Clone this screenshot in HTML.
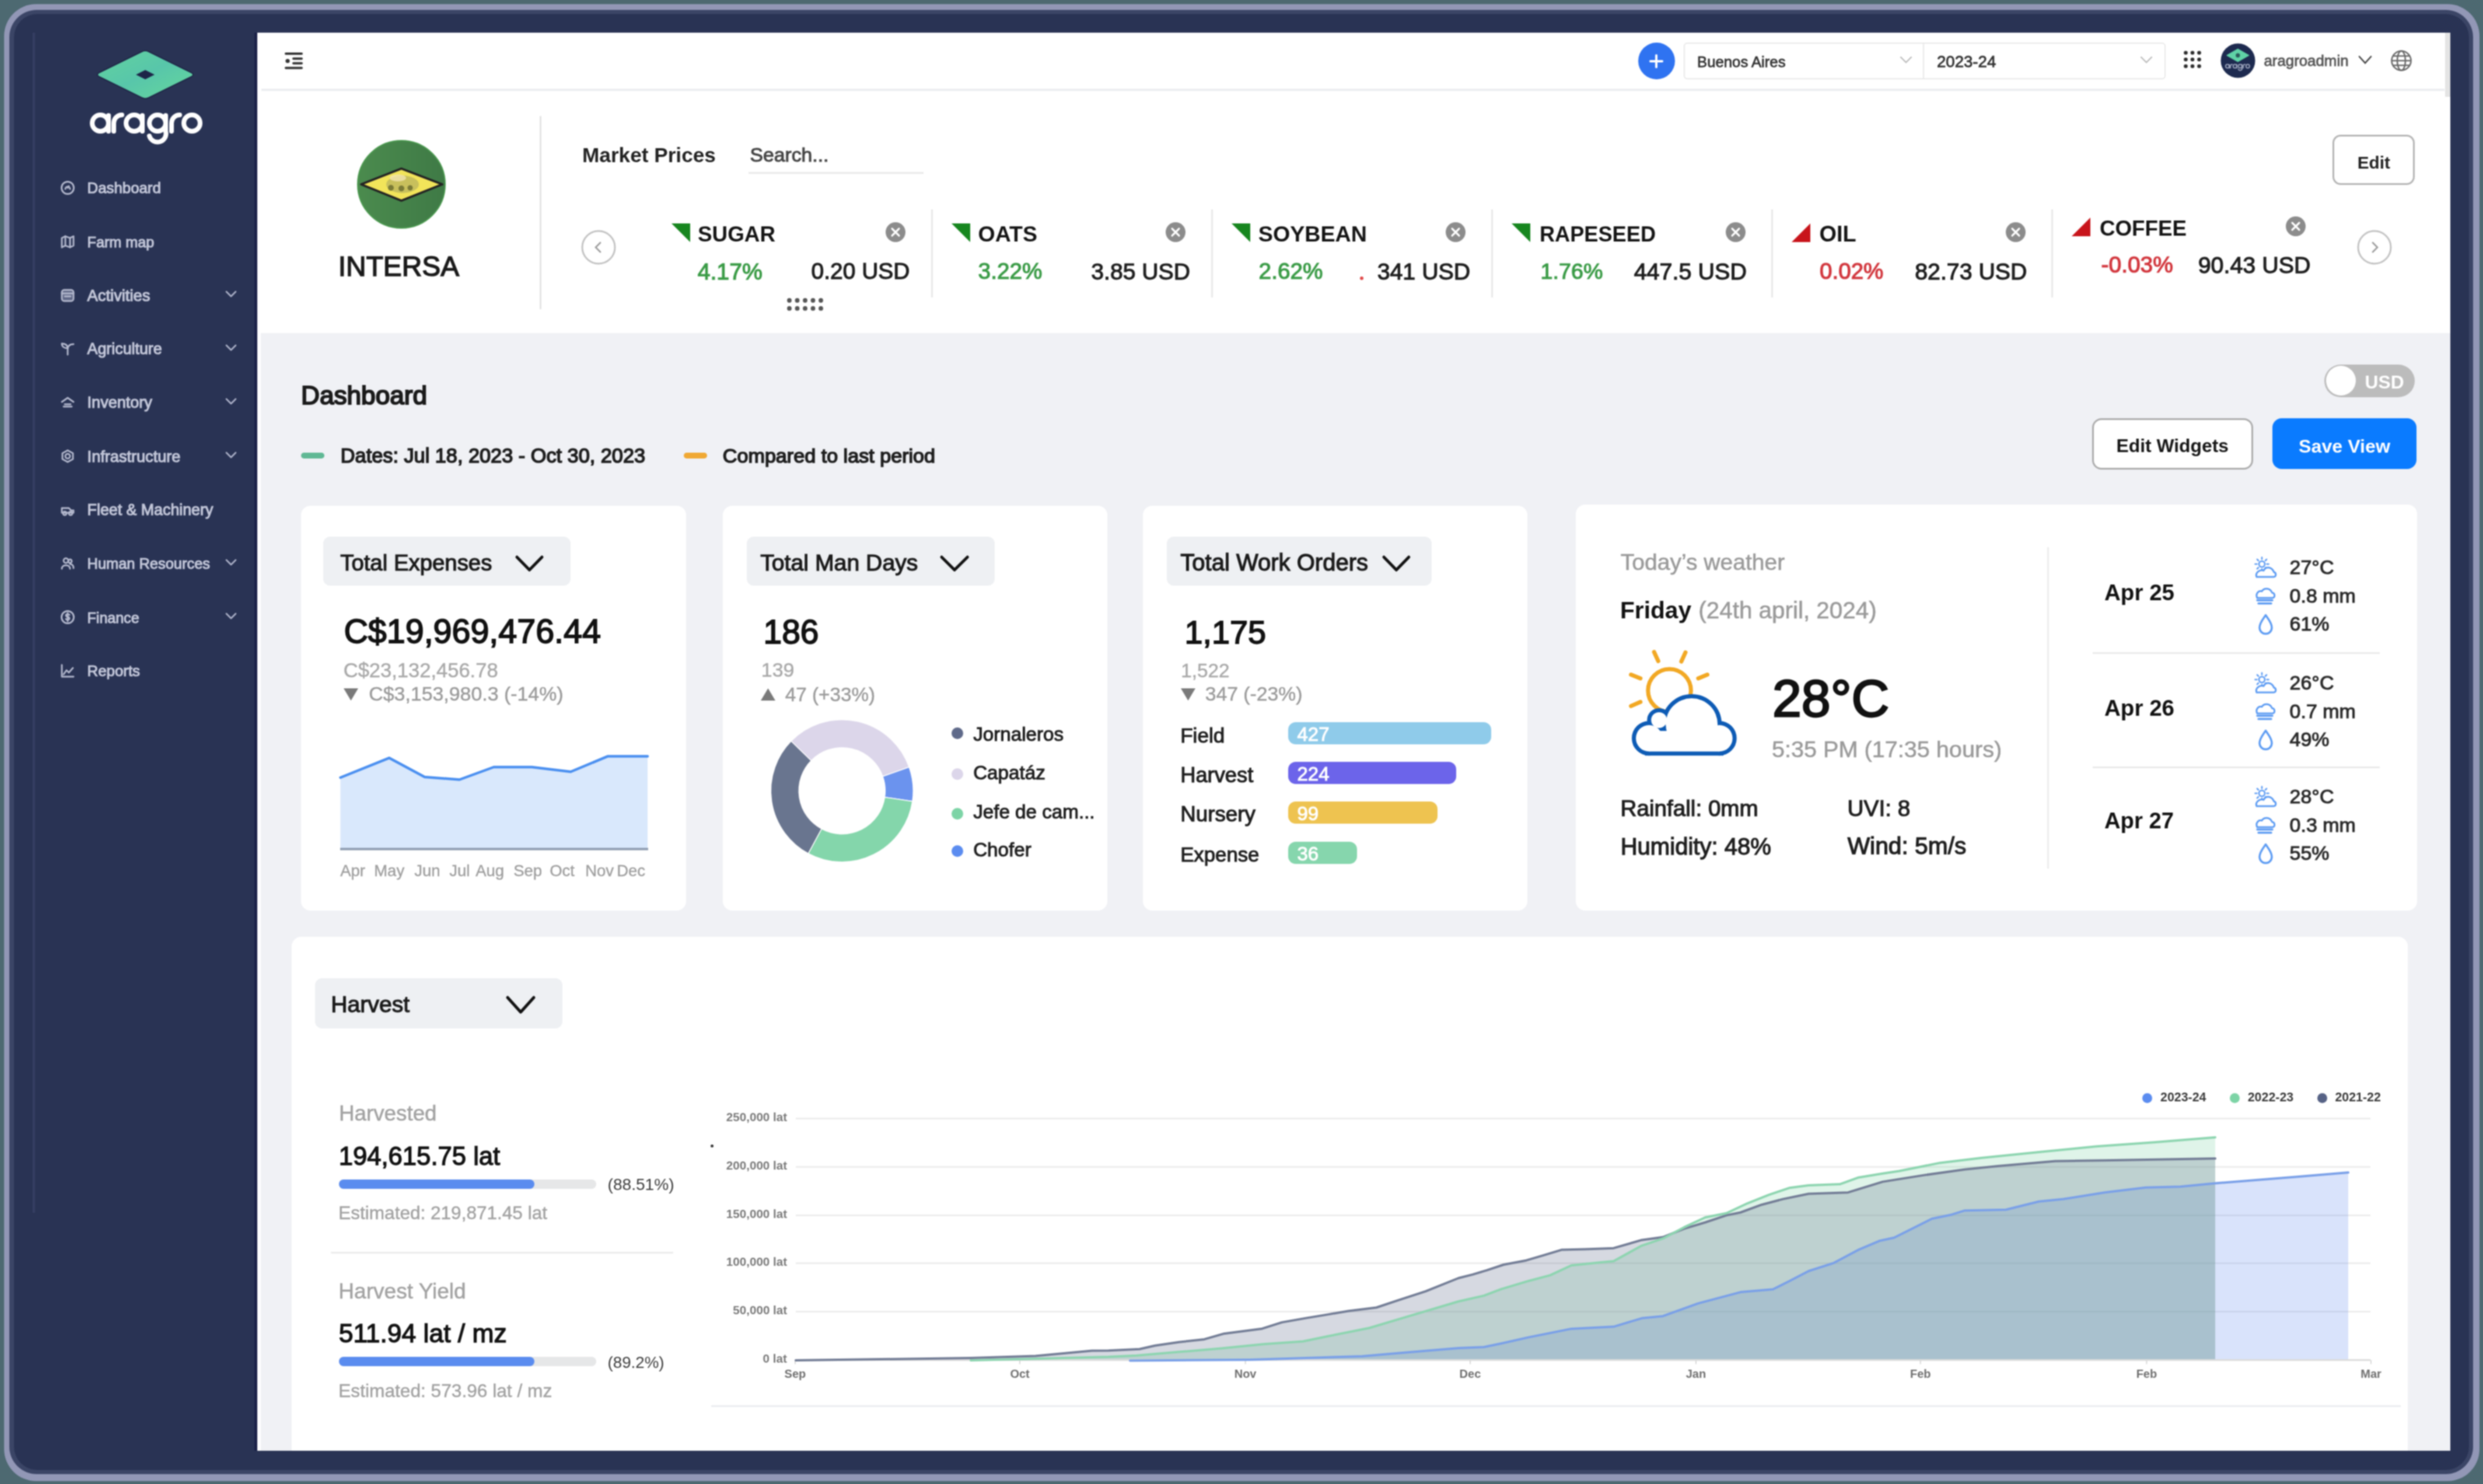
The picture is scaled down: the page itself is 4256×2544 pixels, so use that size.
<!DOCTYPE html>
<html><head><meta charset="utf-8"><title>aragro dashboard</title>
<style>
html,body{margin:0;padding:0}
body{width:4256px;height:2544px;position:relative;overflow:hidden;background:#4d6971;font-family:"Liberation Sans",sans-serif}
#wrap{position:absolute;left:0;top:0;width:4256px;height:2544px;filter:blur(0.8px)}
.t{position:absolute;line-height:1;white-space:nowrap;font-family:"Liberation Sans",sans-serif}
svg{overflow:visible}
</style></head><body>
<div id="wrap">
<div style="position:absolute;left:7.00px;top:7.00px;width:4242.60px;height:2531.60px;background:#9297b6;border-radius:55px"></div>
<div style="position:absolute;left:16.00px;top:17.00px;width:4223.00px;height:2510.00px;background:#3b4566;border-radius:47px"></div>
<div style="position:absolute;left:23.50px;top:24.00px;width:4208.50px;height:2496.00px;background:#293354;border-radius:40px"></div>
<div style="position:absolute;left:56.00px;top:56.00px;width:3.50px;height:2023.00px;background:#353e62"></div>
<div style="position:absolute;left:436.00px;top:56.00px;width:5.00px;height:2431.00px;background:#1b2248"></div>
<svg style="position:absolute;left:144px;top:80px;" width="200" height="96" viewBox="0 0 200 96">
<defs><linearGradient id="lg" x1="0" y1="0" x2="1" y2="1">
<stop offset="0" stop-color="#62d39f"/><stop offset="0.5" stop-color="#58c6aa"/><stop offset="1" stop-color="#66d89c"/></linearGradient></defs>
<path d="M 99 8.5 Q 105 5.5 111 8.5 L 184 44.5 Q 190 48 184 51.5 L 111 87.5 Q 105 90.5 99 87.5 L 26 51.5 Q 20 48 26 44.5 Z" fill="url(#lg)" stroke="#1f2747" stroke-width="2"/>
<path d="M 105 40 L 121 48 L 105 56 L 89 48 Z" fill="#1d2548"/>
</svg>
<svg style="position:absolute;left:152px;top:193px;" width="200" height="56" viewBox="0 0 200 56"><g fill="none" stroke="#ffffff" stroke-width="8" stroke-linecap="round">
<circle cx="20" cy="18" r="14"/><line x1="34" y1="5" x2="34" y2="32"/>
<path d="M 43 32 L 43 18 A 14 14 0 0 1 57 4"/>
<circle cx="78" cy="18" r="14"/><line x1="92" y1="5" x2="92" y2="32"/>
<circle cx="118" cy="18" r="14"/><path d="M 132 5 L 132 32 A 14 14 0 0 1 104 40"/>
<path d="M 142 32 L 142 18 A 14 14 0 0 1 156 4"/>
<circle cx="177" cy="18" r="14"/>
</g></svg>
<div class="t" style="left:149.58px;top:310.16px;font-size:25.80px;font-weight:400;color:#c3c7d9;-webkit-text-stroke:1.16px #c3c7d9;">Dashboard</div>
<svg style="position:absolute;left:103px;top:309px;" width="27" height="27" viewBox="0 0 27 27"><g fill="none" stroke="#b3b8cd" stroke-width="2.9" stroke-linecap="round" stroke-linejoin="round"><circle cx="13" cy="13" r="10.5"/><path d="M9 15 A4 4 0 0 1 17 15"/><line x1="13" y1="13" x2="15" y2="10"/></g></svg>
<div class="t" style="left:149.57px;top:402.69px;font-size:25.17px;font-weight:400;color:#c3c7d9;-webkit-text-stroke:1.13px #c3c7d9;">Farm map</div>
<svg style="position:absolute;left:103px;top:401px;" width="27" height="27" viewBox="0 0 27 27"><g fill="none" stroke="#b3b8cd" stroke-width="2.9" stroke-linecap="round" stroke-linejoin="round"><path d="M3 7 L9 4 L17 7 L23 4 L23 20 L17 23 L9 20 L3 23 Z"/><line x1="9" y1="4" x2="9" y2="20"/><line x1="17" y1="7" x2="17" y2="23"/></g></svg>
<div class="t" style="left:149.61px;top:492.88px;font-size:27.32px;font-weight:400;color:#c3c7d9;-webkit-text-stroke:1.23px #c3c7d9;">Activities</div>
<svg style="position:absolute;left:103px;top:493px;" width="27" height="27" viewBox="0 0 27 27"><g fill="none" stroke="#b3b8cd" stroke-width="2.9" stroke-linecap="round" stroke-linejoin="round"><rect x="3" y="4" width="20" height="19" rx="4" fill="#8e94b0" fill-opacity="0.55"/><line x1="3" y1="10" x2="23" y2="10"/><line x1="8" y1="15" x2="18" y2="15"/></g></svg>
<svg style="position:absolute;left:385px;top:497px;" width="22" height="14" viewBox="0 0 22 14"><path d="M3 3 L11 11 L19 3" fill="none" stroke="#aeb3ca" stroke-width="2.6" stroke-linecap="round" stroke-linejoin="round"/></svg>
<div class="t" style="left:149.60px;top:585.32px;font-size:26.80px;font-weight:400;color:#c3c7d9;-webkit-text-stroke:1.21px #c3c7d9;">Agriculture</div>
<svg style="position:absolute;left:103px;top:585px;" width="27" height="27" viewBox="0 0 27 27"><g fill="none" stroke="#b3b8cd" stroke-width="2.9" stroke-linecap="round" stroke-linejoin="round"><path d="M13 23 L13 12"/><path d="M13 12 C 13 6, 8 4, 3 4 C 3 9, 7 12, 13 12"/><path d="M13 12 C 14 7, 18 5, 23 5"/></g></svg>
<svg style="position:absolute;left:385px;top:589px;" width="22" height="14" viewBox="0 0 22 14"><path d="M3 3 L11 11 L19 3" fill="none" stroke="#aeb3ca" stroke-width="2.6" stroke-linecap="round" stroke-linejoin="round"/></svg>
<div class="t" style="left:149.61px;top:677.11px;font-size:27.04px;font-weight:400;color:#c3c7d9;-webkit-text-stroke:1.22px #c3c7d9;">Inventory</div>
<svg style="position:absolute;left:103px;top:677px;" width="27" height="27" viewBox="0 0 27 27"><g fill="none" stroke="#b3b8cd" stroke-width="2.9" stroke-linecap="round" stroke-linejoin="round"><path d="M3 12 L13 5 L23 12"/><path d="M6 20 L20 20 M8 16 L18 16"/></g></svg>
<svg style="position:absolute;left:385px;top:681px;" width="22" height="14" viewBox="0 0 22 14"><path d="M3 3 L11 11 L19 3" fill="none" stroke="#aeb3ca" stroke-width="2.6" stroke-linecap="round" stroke-linejoin="round"/></svg>
<div class="t" style="left:149.61px;top:769.04px;font-size:27.13px;font-weight:400;color:#c3c7d9;-webkit-text-stroke:1.22px #c3c7d9;">Infrastructure</div>
<svg style="position:absolute;left:103px;top:769px;" width="27" height="27" viewBox="0 0 27 27"><g fill="none" stroke="#b3b8cd" stroke-width="2.9" stroke-linecap="round" stroke-linejoin="round"><path d="M13 3 L22 8 L22 18 L13 23 L4 18 L4 8 Z"/><circle cx="13" cy="13" r="4"/></g></svg>
<svg style="position:absolute;left:385px;top:773px;" width="22" height="14" viewBox="0 0 22 14"><path d="M3 3 L11 11 L19 3" fill="none" stroke="#aeb3ca" stroke-width="2.6" stroke-linecap="round" stroke-linejoin="round"/></svg>
<div class="t" style="left:149.60px;top:861.34px;font-size:26.77px;font-weight:400;color:#c3c7d9;-webkit-text-stroke:1.20px #c3c7d9;">Fleet &amp; Machinery</div>
<svg style="position:absolute;left:103px;top:861px;" width="27" height="27" viewBox="0 0 27 27"><g fill="none" stroke="#b3b8cd" stroke-width="2.9" stroke-linecap="round" stroke-linejoin="round"><path d="M3 18 L3 10 L15 10 L19 14 L23 14 L23 18 Z"/><circle cx="8" cy="19" r="3"/><circle cx="18" cy="19" r="3"/></g></svg>
<div class="t" style="left:149.57px;top:954.49px;font-size:25.41px;font-weight:400;color:#c3c7d9;-webkit-text-stroke:1.14px #c3c7d9;">Human Resources</div>
<svg style="position:absolute;left:103px;top:953px;" width="27" height="27" viewBox="0 0 27 27"><g fill="none" stroke="#b3b8cd" stroke-width="2.9" stroke-linecap="round" stroke-linejoin="round"><circle cx="10" cy="8" r="4"/><path d="M3 22 C3 14, 17 14, 17 22"/><circle cx="17" cy="9" r="3"/><path d="M17 14 C21 14, 23 17, 23 21"/></g></svg>
<svg style="position:absolute;left:385px;top:957px;" width="22" height="14" viewBox="0 0 22 14"><path d="M3 3 L11 11 L19 3" fill="none" stroke="#aeb3ca" stroke-width="2.6" stroke-linecap="round" stroke-linejoin="round"/></svg>
<div class="t" style="left:149.56px;top:1046.82px;font-size:25.02px;font-weight:400;color:#c3c7d9;-webkit-text-stroke:1.13px #c3c7d9;">Finance</div>
<svg style="position:absolute;left:103px;top:1045px;" width="27" height="27" viewBox="0 0 27 27"><g fill="none" stroke="#b3b8cd" stroke-width="2.9" stroke-linecap="round" stroke-linejoin="round"><circle cx="13" cy="13" r="10.5"/><path d="M16 9 C 14 7, 10 8, 10 10 C 10 13, 16 12, 16 15 C 16 18, 11 18, 10 16"/><line x1="13" y1="6" x2="13" y2="20"/></g></svg>
<svg style="position:absolute;left:385px;top:1049px;" width="22" height="14" viewBox="0 0 22 14"><path d="M3 3 L11 11 L19 3" fill="none" stroke="#aeb3ca" stroke-width="2.6" stroke-linecap="round" stroke-linejoin="round"/></svg>
<div class="t" style="left:149.58px;top:1138.13px;font-size:25.84px;font-weight:400;color:#c3c7d9;-webkit-text-stroke:1.16px #c3c7d9;">Reports</div>
<svg style="position:absolute;left:103px;top:1137px;" width="27" height="27" viewBox="0 0 27 27"><g fill="none" stroke="#b3b8cd" stroke-width="2.9" stroke-linecap="round" stroke-linejoin="round"><path d="M3 3 L3 23 L23 23"/><path d="M6 19 L11 12 L15 16 L22 8"/></g></svg>
<div style="position:absolute;left:441.00px;top:56.00px;width:3759.00px;height:2431.00px;background:#ffffff"></div>
<div style="position:absolute;left:447.00px;top:571.00px;width:3753.00px;height:1916.00px;background:#f0f1f5"></div>
<div style="position:absolute;left:448.00px;top:152.00px;width:3742.00px;height:4.00px;background:#eceef1"></div>
<div style="position:absolute;left:4191.00px;top:56.00px;width:9.00px;height:110.00px;background:#e4e4e4"></div>
<svg style="position:absolute;left:486px;top:88px;" width="36" height="32" viewBox="0 0 36 32"><g fill="#333"><rect x="2" y="2" width="31" height="4" rx="2"/><rect x="15" y="10.5" width="18" height="4" rx="2"/><rect x="15" y="18.5" width="18" height="4" rx="2"/><rect x="2" y="26.5" width="31" height="4" rx="2"/><circle cx="7" cy="16.5" r="3.6"/></g></svg>
<div style="position:absolute;left:2807.50px;top:73.00px;width:63.00px;height:63.00px;background:#2f73f1;border-radius:50%"></div>
<div style="position:absolute;left:2827.00px;top:102.50px;width:24.00px;height:4.00px;background:#fff;border-radius:2px"></div>
<div style="position:absolute;left:2837.00px;top:92.50px;width:4.00px;height:24.00px;background:#fff;border-radius:2px"></div>
<div style="position:absolute;left:2885.50px;top:73.00px;width:826.00px;height:63.00px;border:2px solid #e8e8e8;border-radius:6px;box-sizing:border-box;background:#fff"></div>
<div style="position:absolute;left:3296.00px;top:74.00px;width:2.00px;height:61.00px;background:#e8e8e8"></div>
<div class="t" style="left:2909.11px;top:93.65px;font-size:25.70px;font-weight:400;color:#333;-webkit-text-stroke:0.82px #333;">Buenos Aires</div>
<div class="t" style="left:3319.94px;top:92.03px;font-size:27.61px;font-weight:400;color:#333;-webkit-text-stroke:0.88px #333;">2023-24</div>
<svg style="position:absolute;left:3256px;top:95px;" width="22" height="16" viewBox="0 0 22 16"><path d="M2 3 L11 12 L20 3" fill="none" stroke="#b8b8b8" stroke-width="2.2" stroke-linecap="round"/></svg>
<svg style="position:absolute;left:3668px;top:95px;" width="22" height="16" viewBox="0 0 22 16"><path d="M2 3 L11 12 L20 3" fill="none" stroke="#b8b8b8" stroke-width="2.2" stroke-linecap="round"/></svg>
<svg style="position:absolute;left:3743px;top:87px;" width="32" height="32" viewBox="0 0 32 32"><g fill="#2b2b2b"><circle cx="3.5" cy="3.5" r="3.3"/><circle cx="15.0" cy="3.5" r="3.3"/><circle cx="26.5" cy="3.5" r="3.3"/><circle cx="3.5" cy="15.0" r="3.3"/><circle cx="15.0" cy="15.0" r="3.3"/><circle cx="26.5" cy="15.0" r="3.3"/><circle cx="3.5" cy="26.5" r="3.3"/><circle cx="15.0" cy="26.5" r="3.3"/><circle cx="26.5" cy="26.5" r="3.3"/></g></svg>
<svg style="position:absolute;left:3806px;top:74px;" width="60" height="60" viewBox="0 0 60 60"><circle cx="30" cy="30" r="29.5" fill="#1d2a4f"/>
<path d="M29.8 10.1 L48.5 20.9 L29.8 31.7 L11.1 20.9 Z" fill="#5fd2a6" stroke="#5fd2a6" stroke-width="1.5" stroke-linejoin="round"/><circle cx="29.8" cy="20.9" r="3.6" fill="#2a5a5a"/>
<g transform="translate(7.5,35.5) scale(0.222)"><g fill="none" stroke="#a3abc2" stroke-width="8" stroke-linecap="round">
<circle cx="20" cy="18" r="14"/><line x1="34" y1="5" x2="34" y2="32"/>
<path d="M 43 32 L 43 18 A 14 14 0 0 1 57 4"/>
<circle cx="78" cy="18" r="14"/><line x1="92" y1="5" x2="92" y2="32"/>
<circle cx="118" cy="18" r="14"/><path d="M 132 5 L 132 32 A 14 14 0 0 1 104 40"/>
<path d="M 142 32 L 142 18 A 14 14 0 0 1 156 4"/>
<circle cx="177" cy="18" r="14"/>
</g></g></svg>
<div class="t" style="left:3880.41px;top:92.11px;font-size:25.85px;font-weight:400;color:#555;-webkit-text-stroke:0.83px #555;">aragroadmin</div>
<svg style="position:absolute;left:4042px;top:94px;" width="24" height="18" viewBox="0 0 24 18"><path d="M2 3 L12 14 L22 3" fill="none" stroke="#444" stroke-width="2.6" stroke-linecap="round"/></svg>
<svg style="position:absolute;left:4097px;top:85px;" width="38" height="38" viewBox="0 0 38 38"><g fill="none" stroke="#6a6a6a" stroke-width="2.6"><circle cx="19" cy="19" r="16.5"/><ellipse cx="19" cy="19" rx="7" ry="16.5"/><line x1="2.5" y1="19" x2="35.5" y2="19"/><path d="M5 11 L33 11 M5 27 L33 27"/></g></svg>
<svg style="position:absolute;left:610px;top:238px;" width="156" height="156" viewBox="0 0 156 156"><defs><linearGradient id="gl" x1="0" y1="0" x2="1" y2="0"><stop offset="0" stop-color="#4b8b4e"/><stop offset="1" stop-color="#3f7a46"/></linearGradient></defs>
<circle cx="78" cy="78" r="75" fill="url(#gl)" stroke="#4a9a4e" stroke-width="2"/>
<path d="M9 51 L78 24 L148 51 L78 79 Z" transform="translate(0,27)" fill="#f2e45a" stroke="#232323" stroke-width="4" stroke-linejoin="round"/>
<ellipse cx="80" cy="78" rx="28" ry="15" fill="#b9b45e" opacity="0.75"/><ellipse cx="72" cy="67" rx="14" ry="6" fill="#f2e4b0" opacity="0.8"/>
<g fill="#7a7a36"><circle cx="60" cy="84" r="5"/><circle cx="78" cy="85" r="5"/><circle cx="93" cy="84" r="4.5"/></g></svg>
<div class="t" style="left:579.77px;top:433.49px;font-size:47.86px;font-weight:400;color:#1a1a1a;-webkit-text-stroke:1.53px #1a1a1a;">INTERSA</div>
<div style="position:absolute;left:925.00px;top:199.00px;width:3.00px;height:331.00px;background:#e3e3e3"></div>
<div class="t" style="left:998.00px;top:247.60px;font-size:35.20px;font-weight:700;color:#222;">Market Prices</div>
<div class="t" style="left:1285.54px;top:248.85px;font-size:33.73px;font-weight:400;color:#444;-webkit-text-stroke:1.08px #444;">Search...</div>
<div style="position:absolute;left:1283.00px;top:295.00px;width:300.00px;height:3.00px;background:#e8e8e8"></div>
<svg style="position:absolute;left:996px;top:394px;" width="60" height="60" viewBox="0 0 60 60"><circle cx="30" cy="30" r="28" fill="none" stroke="#c2c2c2" stroke-width="3"/><path d="M33 22 L25 30 L33 38" fill="none" stroke="#9a9a9a" stroke-width="2.6" stroke-linecap="round"/></svg>
<svg style="position:absolute;left:4040px;top:394px;" width="60" height="60" viewBox="0 0 60 60"><circle cx="30" cy="30" r="28" fill="none" stroke="#c2c2c2" stroke-width="3"/><path d="M27 22 L35 30 L27 38" fill="none" stroke="#9a9a9a" stroke-width="2.6" stroke-linecap="round"/></svg>
<svg style="position:absolute;left:1150.5px;top:383px;" width="32" height="32" viewBox="0 0 32 32"><path d="M0 0 L32 0 L32 32 Z" fill="#17861f"/></svg>
<div class="t" style="left:1196.00px;top:383.51px;font-size:36.84px;font-weight:700;color:#141414;">SUGAR</div>
<svg style="position:absolute;left:1517px;top:380px;" width="36" height="36" viewBox="0 0 36 36"><circle cx="18" cy="18" r="17" fill="#8c8c8c"/><path d="M12 12 L24 24 M24 12 L12 24" stroke="#fff" stroke-width="3.2" stroke-linecap="round"/></svg>
<div class="t" style="left:1195.63px;top:445.78px;font-size:39.24px;font-weight:400;color:#3a9b46;-webkit-text-stroke:1.26px #3a9b46;">4.17%</div>
<div class="t" style="left:1390.62px;top:446.05px;font-size:38.93px;font-weight:400;color:#1e1e1e;-webkit-text-stroke:1.25px #1e1e1e;">0.20 USD</div>
<div style="position:absolute;left:1596.00px;top:359.00px;width:3.00px;height:151.00px;background:#e8e8e8"></div>
<svg style="position:absolute;left:1630.5px;top:383px;" width="32" height="32" viewBox="0 0 32 32"><path d="M0 0 L32 0 L32 32 Z" fill="#17861f"/></svg>
<div class="t" style="left:1676.60px;top:382.97px;font-size:37.49px;font-weight:700;color:#141414;">OATS</div>
<svg style="position:absolute;left:1997px;top:380px;" width="36" height="36" viewBox="0 0 36 36"><circle cx="18" cy="18" r="17" fill="#8c8c8c"/><path d="M12 12 L24 24 M24 12 L12 24" stroke="#fff" stroke-width="3.2" stroke-linecap="round"/></svg>
<div class="t" style="left:1676.62px;top:446.23px;font-size:38.72px;font-weight:400;color:#3a9b46;-webkit-text-stroke:1.24px #3a9b46;">3.22%</div>
<div class="t" style="left:1870.33px;top:445.87px;font-size:39.13px;font-weight:400;color:#1e1e1e;-webkit-text-stroke:1.25px #1e1e1e;">3.85 USD</div>
<div style="position:absolute;left:2076.00px;top:359.00px;width:3.00px;height:151.00px;background:#e8e8e8"></div>
<svg style="position:absolute;left:2110.5px;top:383px;" width="32" height="32" viewBox="0 0 32 32"><path d="M0 0 L32 0 L32 32 Z" fill="#17861f"/></svg>
<div class="t" style="left:2156.80px;top:382.83px;font-size:37.65px;font-weight:700;color:#141414;">SOYBEAN</div>
<svg style="position:absolute;left:2477px;top:380px;" width="36" height="36" viewBox="0 0 36 36"><circle cx="18" cy="18" r="17" fill="#8c8c8c"/><path d="M12 12 L24 24 M24 12 L12 24" stroke="#fff" stroke-width="3.2" stroke-linecap="round"/></svg>
<div class="t" style="left:2157.62px;top:446.23px;font-size:38.72px;font-weight:400;color:#3a9b46;-webkit-text-stroke:1.24px #3a9b46;">2.62%</div>
<div class="t" style="left:2360.63px;top:445.69px;font-size:39.35px;font-weight:400;color:#1e1e1e;-webkit-text-stroke:1.26px #1e1e1e;">341 USD</div>
<div style="position:absolute;left:2556.00px;top:359.00px;width:3.00px;height:151.00px;background:#e8e8e8"></div>
<svg style="position:absolute;left:2590.5px;top:383px;" width="32" height="32" viewBox="0 0 32 32"><path d="M0 0 L32 0 L32 32 Z" fill="#17861f"/></svg>
<div class="t" style="left:2639.00px;top:384.07px;font-size:36.18px;font-weight:700;color:#141414;">RAPESEED</div>
<svg style="position:absolute;left:2957px;top:380px;" width="36" height="36" viewBox="0 0 36 36"><circle cx="18" cy="18" r="17" fill="#8c8c8c"/><path d="M12 12 L24 24 M24 12 L12 24" stroke="#fff" stroke-width="3.2" stroke-linecap="round"/></svg>
<div class="t" style="left:2640.60px;top:447.11px;font-size:37.67px;font-weight:400;color:#3a9b46;-webkit-text-stroke:1.21px #3a9b46;">1.76%</div>
<div class="t" style="left:2800.63px;top:445.55px;font-size:39.52px;font-weight:400;color:#1e1e1e;-webkit-text-stroke:1.26px #1e1e1e;">447.5 USD</div>
<div style="position:absolute;left:3036.00px;top:359.00px;width:3.00px;height:151.00px;background:#e8e8e8"></div>
<svg style="position:absolute;left:3070.5px;top:383px;" width="32" height="32" viewBox="0 0 32 32"><path d="M0 32 L32 32 L32 0 Z" fill="#c8141b"/></svg>
<div class="t" style="left:3118.50px;top:382.62px;font-size:37.90px;font-weight:700;color:#141414;">OIL</div>
<svg style="position:absolute;left:3437px;top:380px;" width="36" height="36" viewBox="0 0 36 36"><circle cx="18" cy="18" r="17" fill="#8c8c8c"/><path d="M12 12 L24 24 M24 12 L12 24" stroke="#fff" stroke-width="3.2" stroke-linecap="round"/></svg>
<div class="t" style="left:3119.12px;top:446.37px;font-size:38.54px;font-weight:400;color:#d2363d;-webkit-text-stroke:1.23px #d2363d;">0.02%</div>
<div class="t" style="left:3282.23px;top:445.74px;font-size:39.29px;font-weight:400;color:#1e1e1e;-webkit-text-stroke:1.26px #1e1e1e;">82.73 USD</div>
<div style="position:absolute;left:3516.00px;top:359.00px;width:3.00px;height:151.00px;background:#e8e8e8"></div>
<svg style="position:absolute;left:3550.5px;top:373px;" width="32" height="32" viewBox="0 0 32 32"><path d="M0 32 L32 32 L32 0 Z" fill="#c8141b"/></svg>
<div class="t" style="left:3599.00px;top:373.60px;font-size:36.74px;font-weight:700;color:#141414;">COFFEE</div>
<svg style="position:absolute;left:3917px;top:370px;" width="36" height="36" viewBox="0 0 36 36"><circle cx="18" cy="18" r="17" fill="#8c8c8c"/><path d="M12 12 L24 24 M24 12 L12 24" stroke="#fff" stroke-width="3.2" stroke-linecap="round"/></svg>
<div class="t" style="left:3601.62px;top:435.09px;font-size:38.88px;font-weight:400;color:#d2363d;-webkit-text-stroke:1.24px #d2363d;">-0.03%</div>
<div class="t" style="left:3767.63px;top:434.64px;font-size:39.41px;font-weight:400;color:#1e1e1e;-webkit-text-stroke:1.26px #1e1e1e;">90.43 USD</div>
<div style="position:absolute;left:2331.00px;top:474.00px;width:6.00px;height:6.00px;background:#e04848;border-radius:50%"></div>
<svg style="position:absolute;left:1348.6px;top:511.4px;" width="64" height="22" viewBox="0 0 64 22"><g fill="#555"><circle cx="4.0" cy="4.0" r="3.9"/><circle cx="17.5" cy="4.0" r="3.9"/><circle cx="31.0" cy="4.0" r="3.9"/><circle cx="44.5" cy="4.0" r="3.9"/><circle cx="58.0" cy="4.0" r="3.9"/><circle cx="4.0" cy="17.7" r="3.9"/><circle cx="17.5" cy="17.7" r="3.9"/><circle cx="31.0" cy="17.7" r="3.9"/><circle cx="44.5" cy="17.7" r="3.9"/><circle cx="58.0" cy="17.7" r="3.9"/></g></svg>
<div style="position:absolute;left:3997.60px;top:231.30px;width:141.00px;height:86.00px;border:3px solid #b4b4b4;border-radius:14px;box-sizing:border-box;background:#fff"></div>
<div class="t" style="left:4040.70px;top:263.78px;font-size:29.79px;font-weight:700;color:#222;">Edit</div>
<div class="t" style="left:516.10px;top:655.64px;font-size:44.13px;font-weight:400;color:#1a1a1a;-webkit-text-stroke:2.21px #1a1a1a;">Dashboard</div>
<div style="position:absolute;left:516.00px;top:776.00px;width:40.00px;height:10.00px;background:#5fb894;border-radius:5px"></div>
<div class="t" style="left:583.86px;top:763.97px;font-size:34.29px;font-weight:400;color:#1e1e1e;-webkit-text-stroke:1.71px #1e1e1e;">Dates: Jul 18, 2023 - Oct 30, 2023</div>
<div style="position:absolute;left:1172.00px;top:776.00px;width:40.00px;height:10.00px;background:#f0a833;border-radius:5px"></div>
<div class="t" style="left:1238.85px;top:764.11px;font-size:34.13px;font-weight:400;color:#1e1e1e;-webkit-text-stroke:1.71px #1e1e1e;">Compared to last period</div>
<div style="position:absolute;left:3984.00px;top:624.50px;width:155.00px;height:56.50px;background:#bcbcbc;border-radius:29px"></div>
<div style="position:absolute;left:3986.60px;top:627.00px;width:51.00px;height:51.00px;background:#fff;border-radius:50%"></div>
<div class="t" style="left:4053.60px;top:640.12px;font-size:31.75px;font-weight:700;color:#ffffff;">USD</div>
<div style="position:absolute;left:3586.00px;top:716.50px;width:276.00px;height:88.50px;border:3px solid #ababab;border-radius:16px;box-sizing:border-box;background:#fff"></div>
<div class="t" style="left:3627.50px;top:749.04px;font-size:31.84px;font-weight:700;color:#151515;">Edit Widgets</div>
<div style="position:absolute;left:3894.50px;top:717.00px;width:247.50px;height:87.00px;background:#0a7bff;border-radius:16px"></div>
<div class="t" style="left:3940.00px;top:748.74px;font-size:32.21px;font-weight:700;color:#ffffff;">Save View</div>
<div style="position:absolute;left:516.00px;top:867.00px;width:660.00px;height:694.00px;background:#fff;border-radius:16px"></div>
<div style="position:absolute;left:1239.00px;top:867.00px;width:659.00px;height:694.00px;background:#fff;border-radius:16px"></div>
<div style="position:absolute;left:1959.00px;top:867.00px;width:659.00px;height:694.00px;background:#fff;border-radius:16px"></div>
<div style="position:absolute;left:2701.00px;top:865.00px;width:1442.00px;height:696.00px;background:#fff;border-radius:16px"></div>
<div style="position:absolute;left:554.00px;top:920.00px;width:424.00px;height:83.50px;background:#eef0f3;border-radius:12px"></div>
<div class="t" style="left:583.21px;top:945.52px;font-size:38.37px;font-weight:400;color:#1a1a1a;-webkit-text-stroke:1.23px #1a1a1a;">Total Expenses</div>
<svg style="position:absolute;left:882px;top:951px;" width="51" height="30" viewBox="0 0 51 30"><path d="M4 4 L25.5 26.0 L47.0 4" fill="none" stroke="#111" stroke-width="5" stroke-linecap="round" stroke-linejoin="round"/></svg>
<div style="position:absolute;left:1280.00px;top:920.00px;width:424.50px;height:83.50px;background:#eef0f3;border-radius:12px"></div>
<div class="t" style="left:1303.23px;top:944.81px;font-size:39.21px;font-weight:400;color:#1a1a1a;-webkit-text-stroke:1.25px #1a1a1a;">Total Man Days</div>
<svg style="position:absolute;left:1609.5px;top:951px;" width="52" height="30" viewBox="0 0 52 30"><path d="M4 4 L26.1 26.0 L48.3 4" fill="none" stroke="#111" stroke-width="5" stroke-linecap="round" stroke-linejoin="round"/></svg>
<div style="position:absolute;left:2000.00px;top:920.00px;width:454.00px;height:83.50px;background:#eef0f3;border-radius:12px"></div>
<div class="t" style="left:2023.24px;top:944.11px;font-size:40.04px;font-weight:400;color:#1a1a1a;-webkit-text-stroke:1.28px #1a1a1a;">Total Work Orders</div>
<svg style="position:absolute;left:2367.9px;top:951px;" width="50" height="30" viewBox="0 0 50 30"><path d="M4 4 L25.4 26.0 L46.8 4" fill="none" stroke="#111" stroke-width="5" stroke-linecap="round" stroke-linejoin="round"/></svg>
<div class="t" style="left:589.42px;top:1054.40px;font-size:57.42px;font-weight:400;color:#111;-webkit-text-stroke:1.84px #111;">C$19,969,476.44</div>
<div class="t" style="left:588.76px;top:1131.77px;font-size:34.53px;font-weight:400;color:#a9a9a9;-webkit-text-stroke:0.52px #a9a9a9;">C$23,132,456.78</div>
<svg style="position:absolute;left:589px;top:1180px;" width="26" height="22" viewBox="0 0 26 22"><path d="M0 0 L25 0 L12.5 21 Z" fill="#7a7a7a"/></svg>
<div class="t" style="left:632.25px;top:1173.01px;font-size:33.89px;font-weight:400;color:#9b9b9b;-webkit-text-stroke:0.51px #9b9b9b;">C$3,153,980.3 (-14%)</div>
<div class="t" style="left:1308.51px;top:1054.81px;font-size:56.93px;font-weight:400;color:#111;-webkit-text-stroke:1.82px #111;">186</div>
<div class="t" style="left:1304.85px;top:1132.31px;font-size:33.89px;font-weight:400;color:#a9a9a9;-webkit-text-stroke:0.51px #a9a9a9;">139</div>
<svg style="position:absolute;left:1304px;top:1180px;" width="26" height="22" viewBox="0 0 26 22"><path d="M0 21 L25 21 L12.5 0 Z" fill="#7a7a7a"/></svg>
<div class="t" style="left:1345.65px;top:1173.51px;font-size:33.30px;font-weight:400;color:#9b9b9b;-webkit-text-stroke:0.50px #9b9b9b;">47 (+33%)</div>
<div class="t" style="left:2030.39px;top:1055.72px;font-size:55.85px;font-weight:400;color:#111;-webkit-text-stroke:1.79px #111;">1,175</div>
<div class="t" style="left:2024.25px;top:1132.78px;font-size:33.33px;font-weight:400;color:#a9a9a9;-webkit-text-stroke:0.50px #a9a9a9;">1,522</div>
<svg style="position:absolute;left:2024px;top:1180px;" width="26" height="22" viewBox="0 0 26 22"><path d="M0 0 L25 0 L12.5 21 Z" fill="#7a7a7a"/></svg>
<div class="t" style="left:2065.65px;top:1173.15px;font-size:33.73px;font-weight:400;color:#9b9b9b;-webkit-text-stroke:0.51px #9b9b9b;">347 (-23%)</div>
<svg style="position:absolute;left:570px;top:1280px;" width="560" height="190" viewBox="0 0 560 190"><polygon points="13.5,175 13.5,53.0 97.0,19.3 157.9,52.0 217.6,56.5 276.3,35.0 341.7,35.0 408.2,43.0 471.4,16.6 540.0,16.6 540.0,175" fill="#d9e8fc"/><polyline points="13.5,53.0 97.0,19.3 157.9,52.0 217.6,56.5 276.3,35.0 341.7,35.0 408.2,43.0 471.4,16.6 540.0,16.6" fill="none" stroke="#4a8ff0" stroke-width="4.5" stroke-linejoin="round" stroke-linecap="round"/><line x1="13" y1="175.5" x2="541" y2="175.5" stroke="#8d9bb0" stroke-width="4"/></svg>
<div class="t" style="left:583.21px;top:1478.72px;font-size:27.50px;font-weight:400;color:#9e9e9e;-webkit-text-stroke:0.41px #9e9e9e;">Apr</div>
<div class="t" style="left:641.21px;top:1478.72px;font-size:27.50px;font-weight:400;color:#9e9e9e;-webkit-text-stroke:0.41px #9e9e9e;">May</div>
<div class="t" style="left:710.21px;top:1478.72px;font-size:27.50px;font-weight:400;color:#9e9e9e;-webkit-text-stroke:0.41px #9e9e9e;">Jun</div>
<div class="t" style="left:770.21px;top:1478.72px;font-size:27.50px;font-weight:400;color:#9e9e9e;-webkit-text-stroke:0.41px #9e9e9e;">Jul</div>
<div class="t" style="left:815.21px;top:1478.72px;font-size:27.50px;font-weight:400;color:#9e9e9e;-webkit-text-stroke:0.41px #9e9e9e;">Aug</div>
<div class="t" style="left:880.21px;top:1478.72px;font-size:27.50px;font-weight:400;color:#9e9e9e;-webkit-text-stroke:0.41px #9e9e9e;">Sep</div>
<div class="t" style="left:942.21px;top:1478.72px;font-size:27.50px;font-weight:400;color:#9e9e9e;-webkit-text-stroke:0.41px #9e9e9e;">Oct</div>
<div class="t" style="left:1003.21px;top:1478.72px;font-size:27.50px;font-weight:400;color:#9e9e9e;-webkit-text-stroke:0.41px #9e9e9e;">Nov</div>
<div class="t" style="left:1057.21px;top:1478.72px;font-size:27.50px;font-weight:400;color:#9e9e9e;-webkit-text-stroke:0.41px #9e9e9e;">Dec</div>
<svg style="position:absolute;left:1300px;top:1220px;" width="290" height="280" viewBox="0 0 290 280"><path d="M55.99 50.49 A122 122 0 0 1 258.30 94.98 L213.06 111.00 A74 74 0 0 0 90.34 84.02 Z" fill="#dcd6ea" stroke="#fff" stroke-width="1.5"/><path d="M258.30 94.98 A122 122 0 0 1 263.96 153.73 L216.49 146.64 A74 74 0 0 0 213.06 111.00 Z" fill="#6b93ee" stroke="#fff" stroke-width="1.5"/><path d="M263.96 153.73 A122 122 0 0 1 85.46 243.12 L108.22 200.86 A74 74 0 0 0 216.49 146.64 Z" fill="#84d6ab" stroke="#fff" stroke-width="1.5"/><path d="M85.46 243.12 A122 122 0 0 1 55.99 50.49 L90.34 84.02 A74 74 0 0 0 108.22 200.86 Z" fill="#69758f" stroke="#fff" stroke-width="1.5"/></svg>
<div style="position:absolute;left:1630.60px;top:1247.00px;width:20.00px;height:20.00px;background:#5f6a8a;border-radius:50%"></div>
<div class="t" style="left:1668.13px;top:1242.40px;font-size:33.20px;font-weight:400;color:#1e1e1e;-webkit-text-stroke:1.06px #1e1e1e;">Jornaleros</div>
<div style="position:absolute;left:1630.60px;top:1317.00px;width:20.00px;height:20.00px;background:#dcd6ea;border-radius:50%"></div>
<div class="t" style="left:1668.13px;top:1307.90px;font-size:33.20px;font-weight:400;color:#1e1e1e;-webkit-text-stroke:1.06px #1e1e1e;">Capatáz</div>
<div style="position:absolute;left:1630.60px;top:1385.00px;width:20.00px;height:20.00px;background:#7dd4a6;border-radius:50%"></div>
<div class="t" style="left:1668.13px;top:1374.50px;font-size:33.20px;font-weight:400;color:#1e1e1e;-webkit-text-stroke:1.06px #1e1e1e;">Jefe de cam...</div>
<div style="position:absolute;left:1630.60px;top:1449.00px;width:20.00px;height:20.00px;background:#5b8cf0;border-radius:50%"></div>
<div class="t" style="left:1668.13px;top:1440.30px;font-size:33.20px;font-weight:400;color:#1e1e1e;-webkit-text-stroke:1.06px #1e1e1e;">Chofer</div>
<div style="position:absolute;left:2208.00px;top:1237.60px;width:348.00px;height:38.00px;background:#8fcbea;border-radius:13px"></div>
<div class="t" style="left:2223.53px;top:1241.67px;font-size:33.00px;font-weight:400;color:#ffffff;-webkit-text-stroke:1.06px #ffffff;">427</div>
<div class="t" style="left:2023.16px;top:1243.25px;font-size:35.15px;font-weight:400;color:#1e1e1e;-webkit-text-stroke:1.12px #1e1e1e;">Field</div>
<div style="position:absolute;left:2208.00px;top:1305.50px;width:288.00px;height:38.00px;background:#6c64ea;border-radius:13px"></div>
<div class="t" style="left:2223.53px;top:1309.57px;font-size:33.00px;font-weight:400;color:#ffffff;-webkit-text-stroke:1.06px #ffffff;">224</div>
<div class="t" style="left:2023.18px;top:1311.23px;font-size:36.35px;font-weight:400;color:#1e1e1e;-webkit-text-stroke:1.16px #1e1e1e;">Harvest</div>
<div style="position:absolute;left:2208.00px;top:1374.00px;width:256.00px;height:38.00px;background:#eec350;border-radius:13px"></div>
<div class="t" style="left:2223.53px;top:1378.07px;font-size:33.00px;font-weight:400;color:#ffffff;-webkit-text-stroke:1.06px #ffffff;">99</div>
<div class="t" style="left:2023.19px;top:1377.87px;font-size:36.78px;font-weight:400;color:#1e1e1e;-webkit-text-stroke:1.18px #1e1e1e;">Nursery</div>
<div style="position:absolute;left:2208.00px;top:1443.00px;width:118.00px;height:38.00px;background:#86d6ad;border-radius:13px"></div>
<div class="t" style="left:2223.53px;top:1447.07px;font-size:33.00px;font-weight:400;color:#ffffff;-webkit-text-stroke:1.06px #ffffff;">36</div>
<div class="t" style="left:2023.16px;top:1447.56px;font-size:34.78px;font-weight:400;color:#1e1e1e;-webkit-text-stroke:1.11px #1e1e1e;">Expense</div>
<div class="t" style="left:2777.69px;top:943.92px;font-size:39.07px;font-weight:400;color:#9a9a9a;-webkit-text-stroke:0.59px #9a9a9a;">Today’s weather</div>
<div class="t" style="left:2777.00px;top:1026.08px;font-size:40.67px;font-weight:700;color:#111;">Friday</div>
<div class="t" style="left:2911.30px;top:1026.30px;font-size:40.40px;font-weight:400;color:#9a9a9a;-webkit-text-stroke:0.61px #9a9a9a;">(24th april, 2024)</div>
<svg style="position:absolute;left:2790px;top:1113px;" width="190" height="188" viewBox="0 0 190 188"><g stroke="#f2a823" stroke-width="7" stroke-linecap="round" fill="none"><circle cx="71.6" cy="70.8" r="36.8"/><line x1="45.2" y1="4.7" x2="52.3" y2="20.3"/><line x1="99" y1="5.4" x2="91.9" y2="21"/><line x1="5.6" y1="43.6" x2="21.8" y2="50"/><line x1="136.5" y1="43.6" x2="120.9" y2="50"/><line x1="5.6" y1="97.4" x2="21.8" y2="90.3"/></g><circle cx="36.7" cy="152.6" r="22.7" fill="#0d5bb5" stroke="#0d5bb5" stroke-width="14"/><circle cx="157" cy="152.6" r="22.7" fill="#0d5bb5" stroke="#0d5bb5" stroke-width="14"/><circle cx="53.7" cy="121.4" r="13.5" fill="#0d5bb5" stroke="#0d5bb5" stroke-width="14"/><circle cx="109.6" cy="128.5" r="44.5" fill="#0d5bb5" stroke="#0d5bb5" stroke-width="14"/><rect x="36.7" y="140" width="120.3" height="35.3" fill="#0d5bb5" stroke="#0d5bb5" stroke-width="14"/><circle cx="36.7" cy="152.6" r="22.7" fill="#ffffff"/><circle cx="157" cy="152.6" r="22.7" fill="#ffffff"/><circle cx="53.7" cy="121.4" r="13.5" fill="#ffffff"/><circle cx="109.6" cy="128.5" r="44.5" fill="#ffffff"/><rect x="36.7" y="140" width="120.3" height="35.3" fill="#ffffff"/></svg>
<div class="t" style="left:3038.03px;top:1152.86px;font-size:89.59px;font-weight:400;color:#111;-webkit-text-stroke:2.87px #111;">28°C</div>
<div class="t" style="left:3036.90px;top:1265.05px;font-size:39.64px;font-weight:400;color:#9a9a9a;-webkit-text-stroke:0.59px #9a9a9a;">5:35 PM (17:35 hours)</div>
<div class="t" style="left:2777.62px;top:1366.69px;font-size:38.64px;font-weight:400;color:#1e1e1e;-webkit-text-stroke:1.24px #1e1e1e;">Rainfall: 0mm</div>
<div class="t" style="left:2777.64px;top:1430.87px;font-size:40.08px;font-weight:400;color:#1e1e1e;-webkit-text-stroke:1.28px #1e1e1e;">Humidity: 48%</div>
<div class="t" style="left:3166.62px;top:1366.59px;font-size:38.76px;font-weight:400;color:#1e1e1e;-webkit-text-stroke:1.24px #1e1e1e;">UVI: 8</div>
<div class="t" style="left:3166.65px;top:1430.31px;font-size:40.74px;font-weight:400;color:#1e1e1e;-webkit-text-stroke:1.30px #1e1e1e;">Wind: 5m/s</div>
<div style="position:absolute;left:3509.00px;top:937.60px;width:3.00px;height:551.00px;background:#ededed"></div>
<div class="t" style="left:3607.00px;top:996.84px;font-size:38.59px;font-weight:700;color:#111;">Apr 25</div>
<div class="t" style="left:3607.00px;top:1195.14px;font-size:38.59px;font-weight:700;color:#111;">Apr 26</div>
<div class="t" style="left:3607.00px;top:1388.21px;font-size:38.26px;font-weight:700;color:#111;">Apr 27</div>
<div style="position:absolute;left:3587.00px;top:1118.00px;width:492.00px;height:3.00px;background:#eaeaea"></div>
<div style="position:absolute;left:3587.00px;top:1313.50px;width:492.00px;height:3.00px;background:#eaeaea"></div>
<svg style="position:absolute;left:3864px;top:954px;" width="38" height="38" viewBox="0 0 38 38"><g fill="none" stroke="#5c9bf3" stroke-width="2.6" stroke-linecap="round"><circle cx="13" cy="13" r="5"/><path d="M21.5 13.0 L24.5 13.0 M19.0 19.0 L21.1 21.1 M13.0 21.5 L13.0 24.5 M7.0 19.0 L4.9 21.1 M4.5 13.0 L1.5 13.0 M7.0 7.0 L4.9 4.9 M13.0 4.5 L13.0 1.5 M19.0 7.0 L21.1 4.9"/><path d="M4 35 L33 35 C38 35 38 28 33.5 26.5 C30 18 20 16 16 24 C9 22 1 28 4 35 Z" fill="#fff" stroke-width="3"/></g></svg>
<svg style="position:absolute;left:3864px;top:1005px;" width="38" height="34" viewBox="0 0 38 34"><g fill="none" stroke="#5c9bf3" stroke-width="3" stroke-linecap="round"><path d="M5 20 L31 20 C36 20 36 12 30.5 11 C27 3 17 2 13 8.5 C7 7 1.5 13 5 20 Z"/><path d="M5 24 L31 24 M7 29.5 L29 29.5" stroke-width="3.4"/></g></svg>
<svg style="position:absolute;left:3868px;top:1048px;" width="32" height="40" viewBox="0 0 32 40"><g fill="none" stroke="#5c9bf3" stroke-width="3.4" stroke-linejoin="round"><path d="M15.5 6.5 C 12 12, 5 19.5, 5 28 A 10.5 10.5 0 0 0 26 28 C 26 19.5, 19 12, 15.5 6.5 Z"/></g></svg>
<div class="t" style="left:3924.54px;top:955.02px;font-size:34.00px;font-weight:400;color:#2a2a2a;-webkit-text-stroke:1.09px #2a2a2a;">27°C</div>
<div class="t" style="left:3924.54px;top:1004.22px;font-size:34.00px;font-weight:400;color:#2a2a2a;-webkit-text-stroke:1.09px #2a2a2a;">0.8 mm</div>
<div class="t" style="left:3924.54px;top:1052.22px;font-size:34.00px;font-weight:400;color:#2a2a2a;-webkit-text-stroke:1.09px #2a2a2a;">61%</div>
<svg style="position:absolute;left:3864px;top:1152px;" width="38" height="38" viewBox="0 0 38 38"><g fill="none" stroke="#5c9bf3" stroke-width="2.6" stroke-linecap="round"><circle cx="13" cy="13" r="5"/><path d="M21.5 13.0 L24.5 13.0 M19.0 19.0 L21.1 21.1 M13.0 21.5 L13.0 24.5 M7.0 19.0 L4.9 21.1 M4.5 13.0 L1.5 13.0 M7.0 7.0 L4.9 4.9 M13.0 4.5 L13.0 1.5 M19.0 7.0 L21.1 4.9"/><path d="M4 35 L33 35 C38 35 38 28 33.5 26.5 C30 18 20 16 16 24 C9 22 1 28 4 35 Z" fill="#fff" stroke-width="3"/></g></svg>
<svg style="position:absolute;left:3864px;top:1203px;" width="38" height="34" viewBox="0 0 38 34"><g fill="none" stroke="#5c9bf3" stroke-width="3" stroke-linecap="round"><path d="M5 20 L31 20 C36 20 36 12 30.5 11 C27 3 17 2 13 8.5 C7 7 1.5 13 5 20 Z"/><path d="M5 24 L31 24 M7 29.5 L29 29.5" stroke-width="3.4"/></g></svg>
<svg style="position:absolute;left:3868px;top:1246px;" width="32" height="40" viewBox="0 0 32 40"><g fill="none" stroke="#5c9bf3" stroke-width="3.4" stroke-linejoin="round"><path d="M15.5 6.5 C 12 12, 5 19.5, 5 28 A 10.5 10.5 0 0 0 26 28 C 26 19.5, 19 12, 15.5 6.5 Z"/></g></svg>
<div class="t" style="left:3924.54px;top:1153.22px;font-size:34.00px;font-weight:400;color:#2a2a2a;-webkit-text-stroke:1.09px #2a2a2a;">26°C</div>
<div class="t" style="left:3924.54px;top:1202.42px;font-size:34.00px;font-weight:400;color:#2a2a2a;-webkit-text-stroke:1.09px #2a2a2a;">0.7 mm</div>
<div class="t" style="left:3924.54px;top:1250.42px;font-size:34.00px;font-weight:400;color:#2a2a2a;-webkit-text-stroke:1.09px #2a2a2a;">49%</div>
<svg style="position:absolute;left:3864px;top:1347px;" width="38" height="38" viewBox="0 0 38 38"><g fill="none" stroke="#5c9bf3" stroke-width="2.6" stroke-linecap="round"><circle cx="13" cy="13" r="5"/><path d="M21.5 13.0 L24.5 13.0 M19.0 19.0 L21.1 21.1 M13.0 21.5 L13.0 24.5 M7.0 19.0 L4.9 21.1 M4.5 13.0 L1.5 13.0 M7.0 7.0 L4.9 4.9 M13.0 4.5 L13.0 1.5 M19.0 7.0 L21.1 4.9"/><path d="M4 35 L33 35 C38 35 38 28 33.5 26.5 C30 18 20 16 16 24 C9 22 1 28 4 35 Z" fill="#fff" stroke-width="3"/></g></svg>
<svg style="position:absolute;left:3864px;top:1398px;" width="38" height="34" viewBox="0 0 38 34"><g fill="none" stroke="#5c9bf3" stroke-width="3" stroke-linecap="round"><path d="M5 20 L31 20 C36 20 36 12 30.5 11 C27 3 17 2 13 8.5 C7 7 1.5 13 5 20 Z"/><path d="M5 24 L31 24 M7 29.5 L29 29.5" stroke-width="3.4"/></g></svg>
<svg style="position:absolute;left:3868px;top:1441px;" width="32" height="40" viewBox="0 0 32 40"><g fill="none" stroke="#5c9bf3" stroke-width="3.4" stroke-linejoin="round"><path d="M15.5 6.5 C 12 12, 5 19.5, 5 28 A 10.5 10.5 0 0 0 26 28 C 26 19.5, 19 12, 15.5 6.5 Z"/></g></svg>
<div class="t" style="left:3924.54px;top:1348.22px;font-size:34.00px;font-weight:400;color:#2a2a2a;-webkit-text-stroke:1.09px #2a2a2a;">28°C</div>
<div class="t" style="left:3924.54px;top:1397.42px;font-size:34.00px;font-weight:400;color:#2a2a2a;-webkit-text-stroke:1.09px #2a2a2a;">0.3 mm</div>
<div class="t" style="left:3924.54px;top:1445.42px;font-size:34.00px;font-weight:400;color:#2a2a2a;-webkit-text-stroke:1.09px #2a2a2a;">55%</div>
<div style="position:absolute;left:500.00px;top:1605.60px;width:3627.00px;height:881.40px;background:#fff;border-radius:16px 16px 0 0"></div>
<div style="position:absolute;left:540.00px;top:1677.00px;width:424.40px;height:85.70px;background:#eef0f3;border-radius:12px"></div>
<div class="t" style="left:567.33px;top:1702.27px;font-size:39.14px;font-weight:400;color:#1a1a1a;-webkit-text-stroke:1.25px #1a1a1a;">Harvest</div>
<svg style="position:absolute;left:866px;top:1706px;" width="54" height="34" viewBox="0 0 54 34"><path d="M4 4 L26.5 29 L49 4" fill="none" stroke="#111" stroke-width="5" stroke-linecap="round" stroke-linejoin="round"/></svg>
<div class="t" style="left:580.88px;top:1890.84px;font-size:36.81px;font-weight:400;color:#a2a2a2;-webkit-text-stroke:0.55px #a2a2a2;">Harvested</div>
<div class="t" style="left:580.70px;top:1961.07px;font-size:43.63px;font-weight:400;color:#111;-webkit-text-stroke:1.40px #111;">194,615.75 lat</div>
<div style="position:absolute;left:580.60px;top:2022.00px;width:441.00px;height:16.00px;background:#e6e7e8;border-radius:8px"></div>
<div style="position:absolute;left:580.60px;top:2022.00px;width:335.40px;height:16.00px;background:#5a8cef;border-radius:8px"></div>
<div class="t" style="left:1041.60px;top:2017.23px;font-size:28.08px;font-weight:400;color:#3a3a3a;">(88.51%)</div>
<div class="t" style="left:580.24px;top:2063.98px;font-size:31.56px;font-weight:400;color:#a2a2a2;-webkit-text-stroke:0.47px #a2a2a2;">Estimated: 219,871.45 lat</div>
<div style="position:absolute;left:566.70px;top:2146.00px;width:587.70px;height:3.00px;background:#ececec"></div>
<div class="t" style="left:580.28px;top:2194.61px;font-size:37.09px;font-weight:400;color:#a2a2a2;-webkit-text-stroke:0.56px #a2a2a2;">Harvest Yield</div>
<div class="t" style="left:580.71px;top:2264.41px;font-size:44.41px;font-weight:400;color:#111;-webkit-text-stroke:1.42px #111;">511.94 lat / mz</div>
<div style="position:absolute;left:580.60px;top:2326.00px;width:441.00px;height:16.00px;background:#e6e7e8;border-radius:8px"></div>
<div style="position:absolute;left:580.60px;top:2326.00px;width:335.40px;height:16.00px;background:#5a8cef;border-radius:8px"></div>
<div class="t" style="left:1041.60px;top:2321.56px;font-size:27.69px;font-weight:400;color:#3a3a3a;">(89.2%)</div>
<div class="t" style="left:580.24px;top:2369.19px;font-size:31.67px;font-weight:400;color:#a2a2a2;-webkit-text-stroke:0.48px #a2a2a2;">Estimated: 573.96 lat / mz</div>
<div class="t" style="left:1244.85px;top:1905.16px;font-size:20.60px;font-weight:700;color:#7a7a7a;">250,000 lat</div>
<div class="t" style="left:1244.85px;top:1988.06px;font-size:20.60px;font-weight:700;color:#7a7a7a;">200,000 lat</div>
<div class="t" style="left:1244.85px;top:2070.56px;font-size:20.60px;font-weight:700;color:#7a7a7a;">150,000 lat</div>
<div class="t" style="left:1244.85px;top:2153.06px;font-size:20.60px;font-weight:700;color:#7a7a7a;">100,000 lat</div>
<div class="t" style="left:1256.35px;top:2235.56px;font-size:20.60px;font-weight:700;color:#7a7a7a;">50,000 lat</div>
<div class="t" style="left:1307.60px;top:2318.56px;font-size:20.60px;font-weight:700;color:#7a7a7a;">0 lat</div>
<div style="position:absolute;left:1364.00px;top:1916.10px;width:2699.00px;height:3.00px;background:#ededed"></div>
<div style="position:absolute;left:1364.00px;top:1999.00px;width:2699.00px;height:3.00px;background:#ededed"></div>
<div style="position:absolute;left:1364.00px;top:2081.50px;width:2699.00px;height:3.00px;background:#ededed"></div>
<div style="position:absolute;left:1364.00px;top:2164.00px;width:2699.00px;height:3.00px;background:#ededed"></div>
<div style="position:absolute;left:1364.00px;top:2246.50px;width:2699.00px;height:3.00px;background:#ededed"></div>
<svg style="position:absolute;left:1350px;top:1900px;" width="2750" height="460" viewBox="0 0 2750 460"><polygon points="587.0,431.5 587.0,432.5 791.7,430.9 912.5,427.3 985.0,424.9 1057.5,418.8 1150.0,411.0 1193.5,409.3 1222.5,403.3 1270.8,392.4 1343.3,377.9 1415.8,374.3 1464.2,359.8 1500.4,356.2 1560.8,334.4 1633.3,315.1 1688.9,310.2 1717.9,295.7 1750.0,279.0 1792.3,265.4 1834.6,242.9 1871.2,227.3 1896.6,221.7 1961.4,189.3 1995.3,182.2 2017.8,175.2 2088.3,173.8 2144.7,159.7 2187.0,155.5 2257.5,144.2 2328.0,135.7 2387.1,134.3 2447.0,128.5 2585.0,117.6 2675.0,110.0 2675.0,431.5" fill="#6d93ef" fill-opacity="0.26"/><polygon points="314.0,431.5 314.0,432.0 550.0,426.0 598.3,423.7 670.8,417.6 743.3,411.6 815.8,404.3 883.5,399.5 924.6,391.0 997.1,376.5 1069.6,354.8 1150.0,331.0 1193.5,321.1 1222.5,310.2 1270.8,295.7 1307.1,286.1 1343.3,269.2 1391.7,264.3 1415.8,261.9 1464.2,235.3 1500.4,223.2 1536.7,203.9 1572.9,187.0 1609.2,179.7 1645.4,162.8 1681.7,148.3 1717.9,136.2 1750.0,132.0 1803.6,130.1 1834.6,118.8 1876.9,111.8 1905.1,107.5 1975.5,93.4 2046.0,85.0 2144.7,75.1 2243.4,65.2 2342.0,58.2 2447.0,49.7 2447.0,431.5" fill="#84d6ab" fill-opacity="0.26"/><polygon points="14.0,431.5 14.0,432.0 314.0,428.0 425.0,424.5 521.6,415.5 550.0,415.2 603.2,412.8 629.7,406.7 670.8,400.7 714.3,395.9 748.2,386.2 813.4,377.7 847.2,366.9 888.3,359.6 924.6,353.6 960.8,347.5 1009.2,341.5 1045.4,329.4 1093.7,313.7 1150.0,291.0 1174.2,284.9 1198.3,277.6 1227.3,268.0 1266.0,260.7 1295.0,252.2 1326.4,242.6 1367.5,241.4 1415.8,239.7 1464.2,225.7 1500.4,220.8 1536.7,206.3 1572.9,195.5 1609.2,183.4 1633.3,178.5 1669.6,165.2 1705.8,155.6 1750.0,146.5 1817.7,144.2 1876.9,125.9 1947.3,114.6 2017.8,104.7 2074.2,99.1 2172.9,90.6 2257.5,89.2 2447.0,86.0 2447.0,431.5" fill="#5f6b8c" fill-opacity="0.26"/><line x1="14" y1="431.5" x2="2713" y2="431.5" stroke="#dcdcdc" stroke-width="3"/><line x1="13" y1="431.5" x2="13" y2="438.5" stroke="#d8d8d8" stroke-width="2"/><line x1="398" y1="431.5" x2="398" y2="438.5" stroke="#d8d8d8" stroke-width="2"/><line x1="784.6999999999998" y1="431.5" x2="784.6999999999998" y2="438.5" stroke="#d8d8d8" stroke-width="2"/><line x1="1170" y1="431.5" x2="1170" y2="438.5" stroke="#d8d8d8" stroke-width="2"/><line x1="1557" y1="431.5" x2="1557" y2="438.5" stroke="#d8d8d8" stroke-width="2"/><line x1="1941.6999999999998" y1="431.5" x2="1941.6999999999998" y2="438.5" stroke="#d8d8d8" stroke-width="2"/><line x1="2329.4" y1="431.5" x2="2329.4" y2="438.5" stroke="#d8d8d8" stroke-width="2"/><line x1="2714" y1="431.5" x2="2714" y2="438.5" stroke="#d8d8d8" stroke-width="2"/><polyline points="14.0,432.0 314.0,428.0 425.0,424.5 521.6,415.5 550.0,415.2 603.2,412.8 629.7,406.7 670.8,400.7 714.3,395.9 748.2,386.2 813.4,377.7 847.2,366.9 888.3,359.6 924.6,353.6 960.8,347.5 1009.2,341.5 1045.4,329.4 1093.7,313.7 1150.0,291.0 1174.2,284.9 1198.3,277.6 1227.3,268.0 1266.0,260.7 1295.0,252.2 1326.4,242.6 1367.5,241.4 1415.8,239.7 1464.2,225.7 1500.4,220.8 1536.7,206.3 1572.9,195.5 1609.2,183.4 1633.3,178.5 1669.6,165.2 1705.8,155.6 1750.0,146.5 1817.7,144.2 1876.9,125.9 1947.3,114.6 2017.8,104.7 2074.2,99.1 2172.9,90.6 2257.5,89.2 2447.0,86.0" fill="none" stroke="#737d96" stroke-width="4" stroke-linejoin="round" stroke-linecap="round"/><polyline points="314.0,432.0 550.0,426.0 598.3,423.7 670.8,417.6 743.3,411.6 815.8,404.3 883.5,399.5 924.6,391.0 997.1,376.5 1069.6,354.8 1150.0,331.0 1193.5,321.1 1222.5,310.2 1270.8,295.7 1307.1,286.1 1343.3,269.2 1391.7,264.3 1415.8,261.9 1464.2,235.3 1500.4,223.2 1536.7,203.9 1572.9,187.0 1609.2,179.7 1645.4,162.8 1681.7,148.3 1717.9,136.2 1750.0,132.0 1803.6,130.1 1834.6,118.8 1876.9,111.8 1905.1,107.5 1975.5,93.4 2046.0,85.0 2144.7,75.1 2243.4,65.2 2342.0,58.2 2447.0,49.7" fill="none" stroke="#8dd5b0" stroke-width="4" stroke-linejoin="round" stroke-linecap="round"/><polyline points="587.0,432.5 791.7,430.9 912.5,427.3 985.0,424.9 1057.5,418.8 1150.0,411.0 1193.5,409.3 1222.5,403.3 1270.8,392.4 1343.3,377.9 1415.8,374.3 1464.2,359.8 1500.4,356.2 1560.8,334.4 1633.3,315.1 1688.9,310.2 1717.9,295.7 1750.0,279.0 1792.3,265.4 1834.6,242.9 1871.2,227.3 1896.6,221.7 1961.4,189.3 1995.3,182.2 2017.8,175.2 2088.3,173.8 2144.7,159.7 2187.0,155.5 2257.5,144.2 2328.0,135.7 2387.1,134.3 2447.0,128.5 2585.0,117.6 2675.0,110.0" fill="none" stroke="#7aa0e8" stroke-width="4" stroke-linejoin="round" stroke-linecap="round"/></svg>
<div class="t" style="left:1344.62px;top:2345.07px;font-size:20.00px;font-weight:700;color:#6e6e6e;">Sep</div>
<div class="t" style="left:1731.38px;top:2345.07px;font-size:20.00px;font-weight:700;color:#6e6e6e;">Oct</div>
<div class="t" style="left:2115.70px;top:2345.07px;font-size:20.00px;font-weight:700;color:#6e6e6e;">Nov</div>
<div class="t" style="left:2501.62px;top:2345.07px;font-size:20.00px;font-weight:700;color:#6e6e6e;">Dec</div>
<div class="t" style="left:2889.75px;top:2345.07px;font-size:20.00px;font-weight:700;color:#6e6e6e;">Jan</div>
<div class="t" style="left:3273.95px;top:2345.07px;font-size:20.00px;font-weight:700;color:#6e6e6e;">Feb</div>
<div class="t" style="left:3661.65px;top:2345.07px;font-size:20.00px;font-weight:700;color:#6e6e6e;">Feb</div>
<div class="t" style="left:4046.25px;top:2345.07px;font-size:20.00px;font-weight:700;color:#6e6e6e;">Mar</div>
<div style="position:absolute;left:3672.10px;top:1873.50px;width:17.00px;height:17.00px;background:#5b8cf0;border-radius:50%"></div>
<div class="t" style="left:3703.00px;top:1871.38px;font-size:21.40px;font-weight:700;color:#3a3a3a;">2023-24</div>
<div style="position:absolute;left:3821.80px;top:1873.50px;width:17.00px;height:17.00px;background:#7dd4a6;border-radius:50%"></div>
<div class="t" style="left:3852.70px;top:1871.38px;font-size:21.40px;font-weight:700;color:#3a3a3a;">2022-23</div>
<div style="position:absolute;left:3971.50px;top:1873.50px;width:17.00px;height:17.00px;background:#566285;border-radius:50%"></div>
<div class="t" style="left:4002.40px;top:1871.38px;font-size:21.40px;font-weight:700;color:#3a3a3a;">2021-22</div>
<div style="position:absolute;left:1219.00px;top:2408.50px;width:2896.00px;height:3.00px;background:#ebedf0"></div>
<div style="position:absolute;left:1217.50px;top:1961.50px;width:5.00px;height:5.00px;background:#333;border-radius:50%"></div>
</div>
</body></html>
